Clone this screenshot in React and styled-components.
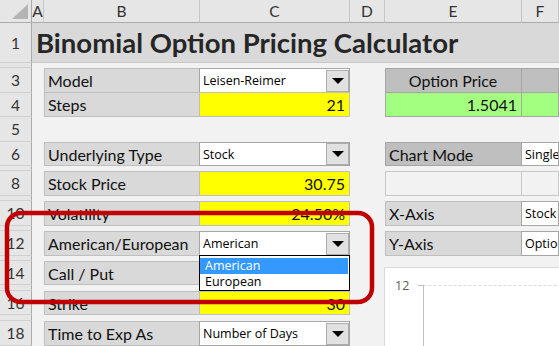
import React from 'react';
import styled, { createGlobalStyle } from 'styled-components';

const Global = createGlobalStyle`
  html, body { margin: 0; padding: 0; background: #f2f2f2; overflow: hidden; }
  body { font-family: Lato, "Liberation Sans", sans-serif; }
  * { box-sizing: border-box; }
`;

const COLS = '32px 12px 156px 150px 35px 137px 1fr';

const Sheet = styled.div`
  position: relative;
  width: 559px;
  height: 346px;
  overflow: hidden;
  background: #f2f2f2;
  display: flex;
  flex-direction: column;
`;

const Row = styled.div`
  display: grid;
  grid-template-columns: ${COLS};
  height: ${(p) => p.$h}px;
  flex: none;
`;

const Corner = styled.div`
  position: relative;
  background: #e6e6e6;
  border-right: 1px solid #ababab;
  border-bottom: 1px solid #ababab;
`;

const ColHead = styled.div`
  background: #e6e6e6;
  border-right: 1px solid #c6c6c6;
  border-bottom: 1px solid #ababab;
  display: flex;
  align-items: center;
  justify-content: center;
  font-size: 15.5px;
  color: #333;
  overflow: hidden;
  white-space: nowrap;
`;

const RowHead = styled.div`
  background: #e6e6e6;
  border-right: 1px solid #ababab;
  border-bottom: 1px solid #d0d0d0;
  display: flex;
  align-items: center;
  justify-content: center;
  font-size: 15.5px;
  color: #333;
  overflow: hidden;
`;

const Empty = styled.div``;

const Title = styled.div`
  grid-column: 2 / -1;
  background: #d9d9d9;
  border-bottom: 1px solid #c8c8c8;
  display: flex;
  align-items: center;
  padding-left: 4px;
  font-weight: 700;
  font-size: 27.5px;
  color: #262626;
  white-space: nowrap;
`;

const Cell = styled.div`
  grid-column: ${(p) => p.$col};
  background: ${(p) => p.$bg || 'transparent'};
  border: 1px solid ${(p) => p.$line || '#bfbfbf'};
  margin-left: ${(p) => (p.$joinLeft ? '-1px' : '0')};
  margin-top: ${(p) => (p.$joinTop ? '-1px' : '0')};
  display: flex;
  align-items: center;
  justify-content: ${(p) => p.$align || 'flex-start'};
  padding: 0 4px 0 3px;
  font-size: 16px;
  color: #111;
  white-space: nowrap;
  overflow: hidden;
`;

const Combo = styled.div`
  grid-column: ${(p) => p.$col};
  margin-left: ${(p) => (p.$joinLeft ? '-1px' : '0')};
  background: #fff;
  border: 1px solid #a6a6a6;
  display: flex;
  align-items: center;
  font-family: "Open Sans", "Noto Sans", sans-serif;
  font-size: 12.5px;
  color: #000;
  padding-left: 3px;
  white-space: nowrap;
  overflow: hidden;
`;

const ComboText = styled.span`
  flex: 1;
  overflow: hidden;
`;

const ArrowBtn = styled.div`
  flex: none;
  width: 23px;
  height: 22px;
  background: #e1e1e1;
  border: 1px solid #adadad;
  display: flex;
  align-items: center;
  justify-content: center;
`;

const Triangle = styled.div`
  width: 0;
  height: 0;
  border-left: 6px solid transparent;
  border-right: 6px solid transparent;
  border-top: 6px solid #000;
`;

const ListBox = styled.div`
  position: absolute;
  left: 199px;
  top: 255px;
  width: 151px;
  height: 36px;
  background: #fff;
  border: 1px solid #000;
  padding-top: 2px;
  font-family: "Open Sans", "Noto Sans", sans-serif;
  font-size: 12.5px;
  display: flex;
  flex-direction: column;
`;

const ListItem = styled.div`
  height: 15.5px;
  line-height: 15px;
  padding-left: 5px;
  margin-right: 1px;
  background: ${(p) => (p.$sel ? '#3399ff' : '#fff')};
  color: ${(p) => (p.$sel ? '#fff' : '#000')};
`;

const Chart = styled.div`
  position: absolute;
  left: 384px;
  top: 267px;
  width: 200px;
  height: 100px;
  background: #fff;
  border: 1px solid #d9d9d9;
`;

const AxisLabel = styled.div`
  position: absolute;
  left: 10px;
  top: ${(p) => p.$top}px;
  font-family: "Open Sans", "Noto Sans", sans-serif;
  font-size: 12.5px;
  line-height: 17px;
  color: #595959;
`;

const Annotation = styled.svg`
  position: absolute;
  left: 0;
  top: 0;
  pointer-events: none;
`;

function Field({ col, joinLeft, data }) {
  if (!data) return <Empty />;
  if (data.combo !== undefined) {
    return (
      <Combo $col={col} $joinLeft={joinLeft}>
        <ComboText>{data.combo}</ComboText>
        {data.arrow !== false && (
          <ArrowBtn>
            <Triangle />
          </ArrowBtn>
        )}
      </Combo>
    );
  }
  return (
    <Cell
      $col={col}
      $joinLeft={joinLeft}
      $joinTop={data.joinTop}
      $bg={data.bg}
      $line={data.line}
      $align={data.align}
    >
      {data.text}
    </Cell>
  );
}

const LABEL = '#d9d9d9';
const HEAD = '#bfbfbf';
const YELLOW = '#ffff00';
const GREEN = '#a2ff80';

const rows = [
  { n: '1', h: 40, title: true },
  { n: '', h: 5 },
  {
    n: '3', h: 25,
    b: { text: 'Model', bg: LABEL },
    c: { combo: 'Leisen-Reimer' },
    e: { text: 'Option Price', bg: HEAD, align: 'center', line: '#a6a6a6' },
    f: { text: '', bg: HEAD, line: '#a6a6a6' },
  },
  {
    n: '4', h: 24,
    b: { text: 'Steps', bg: LABEL, joinTop: true },
    c: { text: '21', bg: YELLOW, align: 'flex-end', joinTop: true },
    e: { text: '1.5041', bg: GREEN, align: 'flex-end', joinTop: true, line: '#a6a6a6' },
    f: { text: '', bg: GREEN, joinTop: true, line: '#a6a6a6' },
  },
  { n: '5', h: 25 },
  {
    n: '6', h: 24,
    b: { text: 'Underlying Type', bg: LABEL },
    c: { combo: 'Stock' },
    e: { text: 'Chart Mode', bg: HEAD, line: '#a6a6a6' },
    f: { combo: 'Single', arrow: false },
  },
  { n: '', h: 5 },
  {
    n: '8', h: 25,
    b: { text: 'Stock Price', bg: LABEL },
    c: { text: '30.75', bg: YELLOW, align: 'flex-end' },
    e: { text: '', bg: '#f2f2f2', line: '#c8c8c8' },
    f: { text: '', bg: '#f2f2f2', line: '#c8c8c8' },
  },
  { n: '', h: 5 },
  {
    n: '10', h: 25,
    b: { text: 'Volatility', bg: LABEL },
    c: { text: '24.50%', bg: YELLOW, align: 'flex-end' },
    e: { text: 'X-Axis', bg: LABEL },
    f: { combo: 'Stock', arrow: false },
  },
  { n: '', h: 5 },
  {
    n: '12', h: 25,
    b: { text: 'American/European', bg: LABEL },
    c: { combo: 'American' },
    e: { text: 'Y-Axis', bg: LABEL },
    f: { combo: 'Option Price', arrow: false },
  },
  { n: '', h: 5 },
  {
    n: '14', h: 24,
    b: { text: 'Call / Put', bg: LABEL },
    c: { combo: '' },
  },
  { n: '', h: 6 },
  {
    n: '16', h: 24,
    b: { text: 'Strike', bg: LABEL },
    c: { text: '30', bg: YELLOW, align: 'flex-end' },
  },
  { n: '', h: 6 },
  {
    n: '18', h: 25,
    b: { text: 'Time to Exp As', bg: LABEL },
    c: { combo: 'Number of Days' },
  },
];

export default function App() {
  return (
    <>
      <Global />
      <Sheet>
        <Row $h={23}>
          <Corner>
            <svg width="32" height="23" style={{ position: 'absolute', left: 0, top: 0 }}>
              <polygon points="12,19 28,19 28,4" fill="#b4b4b4" />
            </svg>
          </Corner>
          <ColHead>A</ColHead>
          <ColHead>B</ColHead>
          <ColHead>C</ColHead>
          <ColHead>D</ColHead>
          <ColHead>E</ColHead>
          <ColHead>F</ColHead>
        </Row>
        {rows.map((r, i) => (
          <Row key={i} $h={r.h}>
            <RowHead>{r.n}</RowHead>
            {r.title ? (
              <Title>Binomial Option Pricing Calculator</Title>
            ) : (
              <>
                <Empty />
                <Field col={3} data={r.b} />
                <Field col={4} joinLeft data={r.c} />
                <Empty />
                <Field col={6} data={r.e} />
                <Field col={7} joinLeft data={r.f} />
              </>
            )}
          </Row>
        ))}
        <Chart>
          <AxisLabel $top={9}>12</AxisLabel>
          <AxisLabel $top={75}>10</AxisLabel>
          <svg width="200" height="100" style={{ position: 'absolute', left: 0, top: 0 }}>
            <line x1="38.5" y1="17.5" x2="200" y2="17.5" stroke="#d9d9d9" strokeDasharray="3 2" />
            <line x1="33" y1="17.5" x2="38.5" y2="17.5" stroke="#bfbfbf" />
            <line x1="38.5" y1="17" x2="38.5" y2="100" stroke="#bfbfbf" />
          </svg>
        </Chart>
        <ListBox>
          <ListItem $sel>American</ListItem>
          <ListItem>European</ListItem>
        </ListBox>
        <Annotation width="559" height="346">
          <rect x="7" y="213" width="365" height="89" rx="14" ry="14" fill="none" stroke="#c00000" strokeWidth="4.5" />
        </Annotation>
      </Sheet>
    </>
  );
}
